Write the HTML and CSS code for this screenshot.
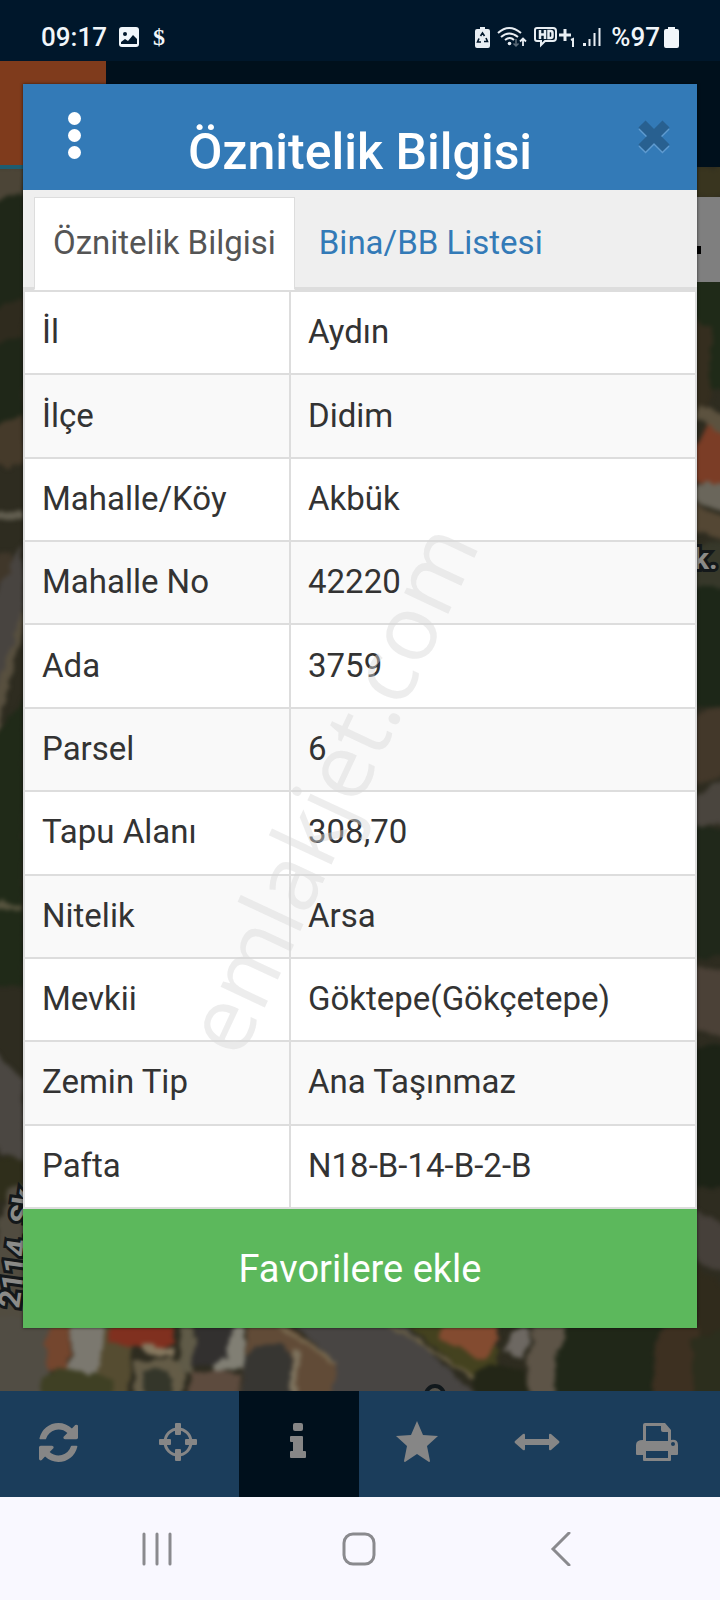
FILE: index.html
```
<!DOCTYPE html>
<html lang="tr">
<head>
  <meta charset="UTF-8">
  <meta name="viewport" content="width=device-width, initial-scale=1.0">
  <title>Öznitelik Bilgisi</title>
  <link rel="stylesheet" href="styles.css">
</head>
<body>

  <div class="status-bar">
    <div class="status-left">
      <span>09:17</span>
      <svg class="icon-image" width="20" height="20" viewBox="0 0 20 20">
        <rect width="20" height="20" rx="3" fill="#f1f6fa"/>
        <circle cx="6" cy="7" r="2" fill="#00172b"/>
        <path d="M2 17v-2l4-3 3 2 5-6 4 4v5z" fill="#00172b"/>
      </svg>
      <span class="dollar">$</span>
    </div>
    <div class="status-right">
      <svg width="15" height="21" viewBox="0 0 15 21">
        <path d="M5 0h5v2h3q2 0 2 2v15q0 2-2 2H2q-2 0-2-2V4q0-2 2-2h3z" fill="#e8eef3"/>
        <path d="M5.500 9l2-3 2 3M11 11l1.500 3.500H9M6 15H2.500L4 11.500" fill="none" stroke="#00172b" stroke-width="1.600"/>
      </svg>
      <svg width="30" height="22" viewBox="0 0 30 22" fill="none" stroke="#e8eef3" stroke-width="2">
        <path d="M1 7Q12-3 24 7M4 11q8-7 17 0M8 14q5-4 9 0"/>
        <circle cx="12.500" cy="17.500" r="1.800" fill="#e8eef3" stroke="none"/>
        <path d="M19 13v7M16.500 17.500L19 20l2.500-2.500" stroke="#5d6d7a" stroke-width="1.500"/>
        <path d="M26 20v-7M23 15.500l3-3 3 3" stroke-width="1.800"/>
      </svg>
      <svg width="42" height="22" viewBox="0 0 42 22" fill="none" stroke="#e8eef3" stroke-width="2">
        <path d="M5 15H3q-2 0-2-2V4q0-2 2-2h16q3 0 3 3v7q0 3-3 3h-8l-4 4v-4z"/>
        <path d="M6 4v9M11 4v9M6 8.500h5M14.500 5v7h2q2 0 2-2V7q0-2-2-2z" stroke-width="2.500"/>
        <path d="M25 9h12M31 3v12" stroke-width="3"/>
        <path d="M37 14l2-1v8"/>
      </svg>
      <svg width="19" height="20" viewBox="0 0 19 20" fill="#e8eef3">
        <path d="M0 16h3v3H0zM5.500 12h2v7h-2zM10.500 6h2v13h-2zM15.500 1h2v18h-2z"/>
      </svg>
      <span class="percent">%97</span>
      <svg class="icon-battery" width="15" height="21" viewBox="0 0 15 21">
        <path d="M4 0h7v2h2q2 0 2 2v15q0 2-2 2H2q-2 0-2-2V4q0-2 2-2h2z" fill="#f1f6fa"/>
      </svg>
    </div>
  </div>

  <div class="app-header">
    <div class="app-logo"></div>
  </div>

  <div class="map">
    <svg class="map-image" viewBox="0 0 720 1224" preserveAspectRatio="none">
      <defs>
        <filter id="soft" x="-5%" y="-5%" width="110%" height="110%" color-interpolation-filters="sRGB">
          <feTurbulence type="fractalNoise" baseFrequency="0.060" numOctaves="3" seed="4" result="noise"/>
          <feDisplacementMap in="SourceGraphic" in2="noise" scale="12" xChannelSelector="R" yChannelSelector="G"/>
          <feGaussianBlur stdDeviation="2"/>
        </filter>
      </defs>
      <rect width="720" height="1224" fill="#2e2c20"/>
      <g filter="url(#soft)">
        <!-- left edge -->
        <path d="M-20 0h44v36L-20 52z" fill="#4c4537"/>
        <path d="M-20 40l44-14v234H-20z" fill="#1f2718"/>
        <path d="M-20 150l44-20v40l-44 15z" fill="#2f2b1e"/>
        <path d="M-20 262l44-14v50H-20z" fill="#453a2a"/>
        <path d="M-20 345h44v6H-20z" fill="#625e50"/>
        <path d="M-20 395l30-10 6 20-36 24z" fill="#40372a"/>
        <path d="M24 375v70L-4 545-20 450z" fill="#484440"/>
        <path d="M24 440v18L-6 580h-8v-30z" fill="#58503f"/>
        <path d="M-20 590l44-60v290H-20z" fill="#202a18"/>
        <path d="M-20 730l44 8v6l-44-6z" fill="#57543f"/>
        <path d="M-20 870l44 45v85l-44-30z" fill="#4b4742"/>
        <path d="M-20 985l44 10v40H-20z" fill="#2f2e1b"/>
        <path d="M8 1020h20v204h-48v-80z" fill="#514c40"/>
        <!-- right edge -->
        <path d="M692 0h48v30h-48z" fill="#39351f"/>
        <path d="M692 112h48v110h-48z" fill="#1f2a18"/>
        <path d="M692 150l18 12v80h-18z" fill="#352e1f"/>
        <path d="M700 235l40 18v30l-44-30z" fill="#5c523f"/>
        <path d="M692 278l18-18 20 14v56l-38-18z" fill="#7b3d26"/>
        <path d="M692 320l16-6 22 10v20l-38-10z" fill="#6a665b"/>
        <path d="M692 335l40 18v24l-40-14z" fill="#544734"/>
        <path d="M692 376h48v60h-48z" fill="#37382a"/>
        <path d="M692 420h48v120h-48z" fill="#1d2718"/>
        <path d="M692 550l48-20v70l-48 20z" fill="#43382a"/>
        <path d="M692 630l48-30v50l-48 12z" fill="#4a453e"/>
        <path d="M692 660h48v130h-48z" fill="#20281a"/>
        <path d="M692 798l48 10v70l-48-18z" fill="#4b4137"/>
        <path d="M692 880h48v140h-48z" fill="#1c2316"/>
        <path d="M692 1045l48 15v50l-48-16z" fill="#46403a"/>
        <path d="M692 1095l48 35v94h-48z" fill="#302b1c"/>
        <!-- houses and streets under the dialog -->
        <path d="M-20 1150h72l-6 90H-20z" fill="#514d44"/>
        <path d="M50 1150h20l-2 58-22-6z" fill="#74462e"/>
        <path d="M70 1150h32l10 26-6 56-48-16 12-20z" fill="#7b786f"/>
        <path d="M108 1150h26l-8 90H92z" fill="#554c31"/>
        <path d="M44 1208q20-14 70 4v28H40z" fill="#3f4024"/>
        <path d="M112 1150h62v26l-20 8-44-10z" fill="#80301f"/>
        <path d="M142 1176l30 6v10l-30-8z" fill="#86785f"/>
        <path d="M134 1193h50v40h-50z" fill="#645c47"/>
        <path d="M144 1204h26v30h-26z" fill="#34362a"/>
        <path d="M180 1150h14v56h-14z" fill="#605b48"/>
        <path d="M196 1150h40l-6 48h-38z" fill="#32302f"/>
        <path d="M236 1150h8v50l-32 8v-10l16-10z" fill="#817f74"/>
        <path d="M190 1206h50v30h-50z" fill="#5d4b3e"/>
        <path d="M248 1150h30l60 46-8 44h-90z" fill="#614b37"/>
        <path d="M244 1190q22-20 46-6v56h-48z" fill="#373632"/>
        <path d="M292 1182l8 2-4 50h-8z" fill="#7d725d"/>
        <path d="M286 1150h110l90 90H330l6-44z" fill="#484543"/>
        <path d="M272 1155l64 40" fill="none" stroke="#78694f" stroke-width="4"/>
        <path d="M396 1150h50l54 34-10 40z" fill="#44421f"/>
        <path d="M384 1155l102 62" fill="none" stroke="#6d6246" stroke-width="3"/>
        <path d="M446 1150h50l2 18-14 24-44-20z" fill="#834b30"/>
        <path d="M508 1162h24l-8 32-20-10z" fill="#6d6862"/>
        <path d="M534 1150h38l-20 90h-28z" fill="#5d5447"/>
        <path d="M476 1206q20-16 48-2l8 36h-62z" fill="#232617"/>
        <path d="M570 1150h90l-10 90h-98l6-56z" fill="#202718"/>
        <path d="M662 1150h34l20 90h-66z" fill="#3d3021"/>
        <path d="M690 1170l50-10v80h-42z" fill="#2c2e1d"/>
      </g>
      <g class="street-labels">
        <text transform="translate(19 1142) rotate(-82)">2114. Sk.</text>
        <text x="693" y="402">k.</text>
        <circle cx="435" cy="1228" r="9" fill="#55524a" stroke="#11181c" stroke-width="4"/>
      </g>
    </svg>
    <div class="map-control"></div>
  </div>

  <div class="toolbar">
    <button class="tool" aria-label="Yenile">
      <svg width="39" height="39" viewBox="0 0 1536 1536">
        <path d="M1511 928q0 5-1 7-64 268-268 434.500T764 1536q-146 0-282.500-55T238 1324l-129 129q-19 19-45 19t-45-19-19-45V960q0-26 19-45t45-19h448q26 0 45 19t19 45-19 45l-137 137q71 66 161 102t187 36q134 0 250-65t186-179q11-17 53-117 8-23 30-23h192q13 0 22.500 9.500T1511 928zm25-800v448q0 26-19 45t-45 19h-448q-26 0-45-19t-19-45 19-45l138-138Q969 256 768 256q-134 0-250 65T332 500q-11 17-53 117-8 23-30 23H50q-13 0-22.500-9.500T18 608v-7q65-268 270-434.500T768 0q146 0 284 55.500T1297 212l130-129q19-19 45-19t45 19 19 45z"/>
      </svg>
    </button>
    <button class="tool" aria-label="Konumum">
      <svg width="40" height="40" viewBox="0 0 40 40">
        <circle cx="20" cy="20" r="13" fill="none" stroke="#868686" stroke-width="3"/>
        <path d="M18 1h4q1 0 1 1v10q0 1-1 1h-4q-1 0-1-1V2q0-1 1-1zM18 27h4q1 0 1 1v10q0 1-1 1h-4q-1 0-1-1V28q0-1 1-1zM2 17h10q1 0 1 1v4q0 1-1 1H2q-1 0-1-1v-4q0-1 1-1zM28 17h10q1 0 1 1v4q0 1-1 1H28q-1 0-1-1v-4q0-1 1-1z"/>
      </svg>
    </button>
    <button class="tool active" aria-label="Bilgi">
      <svg width="40" height="40" viewBox="0 0 40 40">
        <rect x="15" y="1" width="10" height="8" rx="2"/>
        <path d="M13 14h11q1 0 1 1v14h2q1 0 1 1v5q0 1-1 1H13q-1 0-1-1v-5q0-1 1-1h2v-9h-2q-1 0-1-1v-4q0-1 1-1z"/>
      </svg>
    </button>
    <button class="tool" aria-label="Favoriler">
      <svg width="44" height="44" viewBox="0 0 44 44">
        <path d="M22 1l6 14 15 1-11 10 3 15q0 1-1 1l-12-8-12 8q-1 0-1-1l3-15L1 16l15-1z"/>
      </svg>
    </button>
    <button class="tool" aria-label="Ölçüm">
      <svg width="46" height="40" viewBox="0 0 46 40">
        <path d="M1 19l8-7q2-1 2 1v4h24v-4q0-2 2-1l8 7q1 1 0 2l-8 7q-2 1-2-1v-4H11v4q0 2-2 1l-8-7q-1-1 0-2z"/>
      </svg>
    </button>
    <button class="tool" aria-label="Yazdır">
      <svg width="42" height="40" viewBox="0 0 42 40">
        <path fill-rule="evenodd" d="M9 1h20l6 7v10q7-1 7 5v9q0 1-1 1h-6v5q0 1-1 1H8q-1 0-1-1v-5H1q-1 0-1-1v-9q0-5 7-5V3q0-2 2-2zm1 3v15h22v-9h-5q-2 0-2-2V4zm0 25v7h22v-7zm27-9a2 2 0 1 0 0 4 2 2 0 1 0 0-4z"/>
      </svg>
    </button>
  </div>

  <div class="system-nav">
    <button aria-label="Son uygulamalar">
      <svg width="34" height="34" viewBox="0 0 34 34"><path d="M4 2v30M17 2v30M30 2v30"/></svg>
    </button>
    <button aria-label="Ana ekran">
      <svg width="34" height="34" viewBox="0 0 34 34"><rect x="2" y="2" width="30" height="30" rx="9"/></svg>
    </button>
    <button aria-label="Geri">
      <svg width="34" height="34" viewBox="0 0 34 34"><path d="M25 1L9 17l16 16"/></svg>
    </button>
  </div>

  <div class="dialog" role="dialog" aria-labelledby="dialog-title">
    <div class="dialog-header">
      <button class="menu-btn" aria-label="Menü"><i></i><i></i><i></i></button>
      <h1 id="dialog-title">Öznitelik Bilgisi</h1>
      <button class="close-btn" aria-label="Kapat">
        <svg width="36" height="38" viewBox="0 0 36 38">
          <path d="M6 6l24 24M30 6L6 30" transform="translate(0 2)" stroke="#5f9bd0"/>
          <path d="M6 6l24 24M30 6L6 30" stroke="#286090"/>
        </svg>
      </button>
    </div>
    <div class="tabs">
      <a href="#bilgi" class="tab active">Öznitelik Bilgisi</a>
      <a href="#liste" class="tab">Bina/BB Listesi</a>
    </div>
    <table class="info-table" id="bilgi">
      <tr><th scope="row">İl</th><td>Aydın</td></tr>
      <tr><th scope="row">İlçe</th><td>Didim</td></tr>
      <tr><th scope="row">Mahalle/Köy</th><td>Akbük</td></tr>
      <tr><th scope="row">Mahalle No</th><td>42220</td></tr>
      <tr><th scope="row">Ada</th><td>3759</td></tr>
      <tr><th scope="row">Parsel</th><td>6</td></tr>
      <tr><th scope="row">Tapu Alanı</th><td>308,70</td></tr>
      <tr><th scope="row">Nitelik</th><td>Arsa</td></tr>
      <tr><th scope="row">Mevkii</th><td>Göktepe(Gökçetepe)</td></tr>
      <tr><th scope="row">Zemin Tip</th><td>Ana Taşınmaz</td></tr>
      <tr><th scope="row">Pafta</th><td>N18-B-14-B-2-B</td></tr>
    </table>
    <button class="favorite-btn">Favorilere ekle</button>
  </div>

  <div class="watermark">emlakjet.com</div>

</body>
</html>
```
FILE: styles.css
```
* {
  box-sizing: border-box;
}
body {
  margin: 0;
  min-height: 100vh;
  display: flex;
  flex-direction: column;
  position: relative;
  overflow-x: hidden;
  font-family: Roboto, "Noto Sans", sans-serif;
  color: #333;
  background-color: #00101c;
}
button {
  border: none;
  background: none;
  padding: 0;
  font-family: inherit;
  cursor: pointer;
}

/* status bar */
.status-bar {
  display: flex;
  justify-content: space-between;
  align-items: center;
  height: 61px;
  padding: 13px 41px 0;
  background-color: #00172b;
  color: #f1f6fa;
  font-size: 26px;
  font-weight: 500;
}
.status-left,
.status-right {
  display: flex;
  align-items: center;
}
.status-left {
  gap: 12px;
}
.status-right {
  gap: 7px;
}
.dollar {
  padding-left: 2px;
  font-family: "Liberation Serif", serif;
  font-size: 24px;
  font-weight: 700;
}
.percent {
  padding-left: 2px;
}
.icon-battery {
  margin-left: -3px;
}

/* page behind the dialog */
.app-header {
  height: 106px;
  background-color: #00101c;
}
.app-logo {
  width: 106px;
  height: 108px;
  background-color: #7f3b1c;
  border-bottom: 4px solid #1d5c70;
  position: relative;
  z-index: 1;
}
.map {
  flex: 1;
  position: relative;
  overflow: hidden;
}
.map-image {
  position: absolute;
  width: 100%;
  height: 100%;
}
.street-labels text {
  font-size: 30px;
  font-weight: 700;
  fill: #8b8b88;
  stroke: #14181a;
  stroke-width: 6px;
  paint-order: stroke;
}
.map-control {
  position: absolute;
  top: 30px;
  right: 0;
  width: 80px;
  height: 85px;
  background-color: #7f7f7f;
}
.map-control::after {
  content: "";
  position: absolute;
  left: 50px;
  top: 49px;
  width: 11px;
  height: 8px;
  background-color: #000;
}
.toolbar {
  display: grid;
  grid-template-columns: repeat(6, 1fr);
  height: 106px;
  padding-right: 2px;
  background-color: #1b3d5b;
}
.tool {
  display: flex;
  align-items: center;
  justify-content: center;
  padding: 0 3px 4px 0;
  fill: #868686;
}
.tool.active {
  background-color: #00101c;
}
.system-nav {
  display: flex;
  justify-content: space-around;
  align-items: center;
  height: 103px;
  padding: 0 58px 0 56px;
  background-color: #f9f8ff;
}
.system-nav svg {
  display: block;
  fill: none;
  stroke: #8a8a8e;
  stroke-width: 3;
  stroke-linecap: round;
}

/* dialog */
.dialog {
  position: absolute;
  z-index: 2;
  top: 84px;
  left: 23px;
  right: 23px;
  background-color: #fff;
  box-shadow: 0 0 3px rgba(0, 0, 0, 0.6);
}
.dialog-header {
  display: grid;
  grid-template-columns: 54px 1fr 54px;
  justify-items: center;
  align-items: center;
  height: 106px;
  padding: 0 16px 0 24px;
  background-color: #337ab7;
}
.dialog-header h1 {
  margin: 30px 8px 0 0;
  font-size: 50px;
  font-weight: 500;
  line-height: 60px;
  color: #fff;
}
.menu-btn {
  display: flex;
  flex-direction: column;
  align-items: center;
  gap: 4px;
  padding-bottom: 4px;
}
.menu-btn i {
  width: 13px;
  height: 13px;
  border-radius: 50%;
  background-color: #fff;
}
.close-btn svg {
  display: block;
  fill: none;
  stroke-width: 10;
}
.tabs {
  display: flex;
  height: 100px;
  padding: 7px 11px 0;
  background-color: #efefef;
  border-bottom: 3px solid #ddd;
}
.tab {
  margin-bottom: -3px;
  padding: 0 18px;
  border: 1px solid transparent;
  font-size: 33px;
  line-height: 90px;
  color: #337ab7;
  text-decoration: none;
}
.tab + .tab {
  margin-left: 5px;
}
.tab.active {
  background-color: #fff;
  border-color: #ddd;
  border-bottom-color: #fff;
  color: #555;
}
.info-table {
  width: 100%;
  height: 919px;
  border-collapse: collapse;
  font-size: 33px;
  line-height: 40px;
}
.info-table th,
.info-table td {
  padding: 0 17px 1px;
  border: 2px solid #ddd;
  font-weight: 400;
  text-align: left;
}
.info-table th {
  width: 266px;
}
.info-table tr:nth-child(even) {
  background-color: #f9f9f9;
}
.favorite-btn {
  display: block;
  width: 100%;
  height: 119px;
  background-color: #5cb85c;
  color: #fff;
  font-size: 38px;
}

.watermark {
  position: absolute;
  z-index: 3;
  top: 788px;
  left: 329px;
  transform: translate(-50%, -50%) rotate(-65deg);
  font-family: "Open Sans", sans-serif;
  font-size: 91px;
  line-height: 1;
  color: rgba(215, 215, 215, 0.45);
  pointer-events: none;
}
```
